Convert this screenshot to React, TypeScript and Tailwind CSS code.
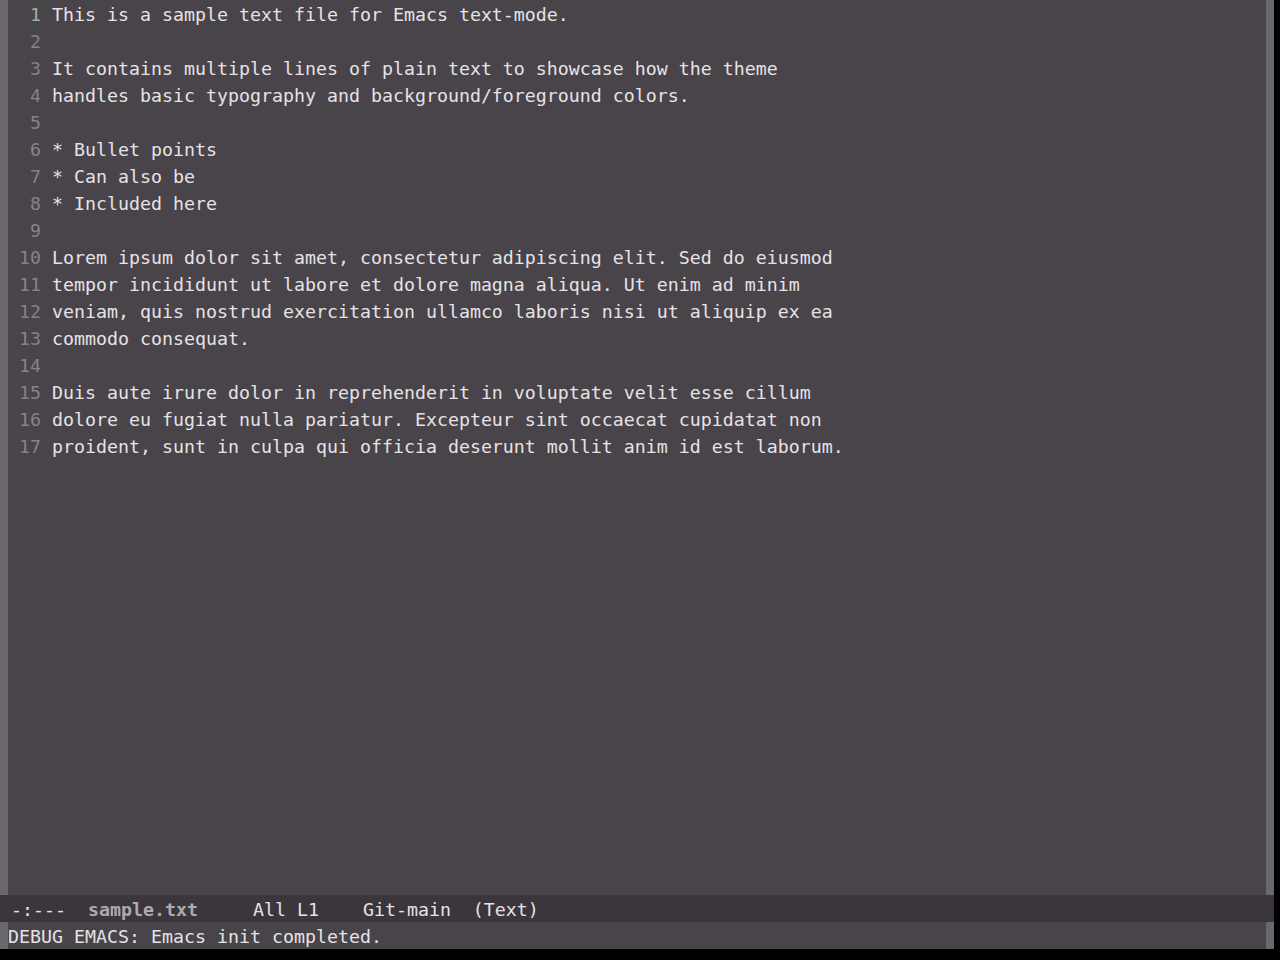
const lines = [
  'This is a sample text file for Emacs text-mode.',
  '',
  'It contains multiple lines of plain text to showcase how the theme',
  'handles basic typography and background/foreground colors.',
  '',
  '* Bullet points',
  '* Can also be',
  '* Included here',
  '',
  'Lorem ipsum dolor sit amet, consectetur adipiscing elit. Sed do eiusmod',
  'tempor incididunt ut labore et dolore magna aliqua. Ut enim ad minim',
  'veniam, quis nostrud exercitation ullamco laboris nisi ut aliquip ex ea',
  'commodo consequat.',
  '',
  'Duis aute irure dolor in reprehenderit in voluptate velit esse cillum',
  'dolore eu fugiat nulla pariatur. Excepteur sint occaecat cupidatat non',
  'proident, sunt in culpa qui officia deserunt mollit anim id est laborum.',
]

export default function App() {
  return (
    <div className="w-[1280px] h-[960px] bg-black flex flex-col font-['DejaVu_Sans_Mono',monospace] text-[18.27px] leading-[27px] whitespace-pre overflow-hidden">
      {/* Buffer window */}
      <div className="flex h-[895px] w-[1274px]">
        <div className="w-[8px] bg-[#6b686d]" />
        <div className="flex-1 bg-[#48444a] text-[#e6e2e6]">
          {lines.map((line, i) => (
            <div key={i} className="flex h-[27px] pt-[1px]">
              <span
                className={`w-[44px] pr-[11px] text-right ${i === 0 ? 'text-[#9db29d]' : 'text-[#86828a]'}`}
              >
                {i + 1}
              </span>
              <span>{line}</span>
            </div>
          ))}
        </div>
        <div className="w-[8px] bg-[#6b686d]" />
      </div>

      {/* Mode line */}
      <div className="h-[27px] pt-[1px] w-[1274px] bg-[#3b363c] text-[#e6e2e6]">
        {' -:---  '}
        <span className="font-bold text-[#aea9b0]">sample.txt</span>
        {'     All L1    Git-main  (Text)'}
      </div>

      {/* Echo area */}
      <div className="flex h-[27px] w-[1274px]">
        <div className="w-[8px] bg-[#6b686d]" />
        <div className="flex-1 pt-[1px] bg-[#48444a] text-[#e6e2e6]">DEBUG EMACS: Emacs init completed.</div>
        <div className="w-[8px] bg-[#6b686d]" />
      </div>
    </div>
  )
}
